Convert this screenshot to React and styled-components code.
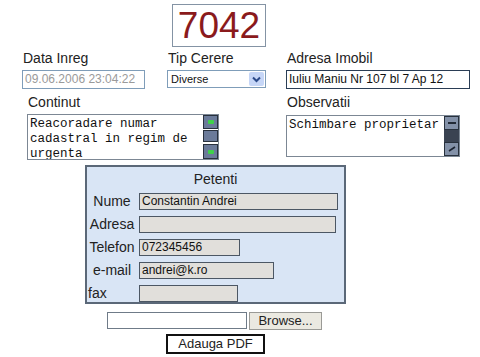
import { Fragment } from 'react'
import styled, { createGlobalStyle } from 'styled-components'

const Global = createGlobalStyle`
  body {
    margin: 0;
    background: #ffffff;
    font-family: "Liberation Sans", Arial, sans-serif;
    color: #222;
  }
`

const Page = styled.div`
  width: 480px;
  height: 357px;
  padding-top: 4px;
  box-sizing: border-box;
  display: flex;
  flex-direction: column;
`
const NumberBox = styled.div`
  margin-left: 172px;
  width: 94px;
  height: 43px;
  box-sizing: border-box;
  border: 1px solid #8493a4;
  color: #8a1a1c;
  font-size: 37px;
  line-height: 41px;
  text-align: center;
`
const FieldsRow = styled.div`
  display: grid;
  grid-template-columns: ${p => p.$cols};
  padding-left: ${p => p.$left}px;
  margin-top: ${p => p.$top}px;
  align-items: start;
`
const Field = styled.div`
  display: flex;
  flex-direction: column;
  gap: 4px;
`
const Label = styled.div`
  font-size: 14px;
  line-height: 16px;
  color: #222;
  padding-left: 1px;
`
const TextBox = styled.div`
  width: ${p => p.$w}px;
  height: 19px;
  box-sizing: border-box;
  border: 1px solid ${p => p.$border || '#7f9db9'};
  color: ${p => p.$color || '#111'};
  font-size: 12px;
  line-height: 17px;
  padding-left: 2px;
  white-space: nowrap;
  overflow: hidden;
  background: #fff;
`
const Select = styled.div`
  width: 99px;
  height: 18px;
  box-sizing: border-box;
  border: 1px solid #7f9db9;
  display: flex;
  align-items: center;
  justify-content: space-between;
  font-size: 11px;
  padding-left: 3px;
  padding-right: 1px;
  color: #111;
`
const ArrowBtn = styled.div`
  width: 15px;
  height: 14px;
  background: #c6d6f7;
  border-radius: 2px;
  display: flex;
  align-items: center;
  justify-content: center;
`
const Area = styled.div`
  width: ${p => p.$w}px;
  height: ${p => p.$h}px;
  margin-top: ${p => p.$top || 0}px;
  box-sizing: border-box;
  border: 1px solid #7c8794;
  display: flex;
  background: #fff;
`
const AreaText = styled.div`
  flex: 1;
  font-family: "Liberation Mono", "Courier New", monospace;
  font-size: 12.5px;
  line-height: 15px;
  padding: 2px 0 0 2px;
  overflow: hidden;
  color: #111;
`
const Scroll = styled.div`
  width: 15px;
  display: flex;
  flex-direction: column;
  background: ${p => p.$track};
`
const ScrollBtn = styled.div`
  height: ${p => p.$h}px;
  box-sizing: border-box;
  border: 1px solid #28313d;
  background: ${p => p.$bg || '#6b7b9a'};
  display: flex;
  align-items: center;
  justify-content: center;
  margin-bottom: ${p => p.$mb || 0}px;
`
const Dot = styled.div`
  width: 6px;
  height: 4px;
  background: #3ed24a;
  border-radius: 1px;
`
const Petenti = styled.div`
  margin-left: 85px;
  margin-top: 5px;
  width: 261px;
  height: 139px;
  box-sizing: border-box;
  border: 2px solid #5b6878;
  background: #d9e5f5;
  padding-top: 4px;
  display: flex;
  flex-direction: column;
`
const BoxTitle = styled.div`
  text-align: center;
  font-size: 14px;
  line-height: 16px;
  margin-bottom: 6px;
  color: #222;
`
const PRows = styled.div`
  display: grid;
  grid-template-columns: 50px auto;
  column-gap: 2px;
  row-gap: 6px;
  align-items: center;
`
const PLabel = styled.div`
  font-size: 14px;
  line-height: 17px;
  text-align: ${p => p.$align || 'center'};
  padding-left: ${p => p.$align === 'left' ? 1 : 0}px;
  color: #222;
`
const PInput = styled.div`
  width: ${p => p.$w}px;
  height: 17px;
  box-sizing: border-box;
  border: 1px solid #4c5764;
  background: #e1dfdb;
  font-size: 12px;
  line-height: 15px;
  padding-left: 2px;
  color: #111;
`
const FileRow = styled.div`
  display: flex;
  gap: 2px;
  margin-left: 107px;
  margin-top: 8px;
`
const FileInput = styled.div`
  width: 140px;
  height: 17px;
  box-sizing: border-box;
  border: 1px solid #6f7b88;
  background: #fff;
`
const BrowseBtn = styled.div`
  width: 73px;
  height: 18px;
  box-sizing: border-box;
  border: 1px solid #9a9a96;
  background: #ebe9e1;
  font-size: 13px;
  line-height: 16px;
  text-align: center;
  color: #222;
`
const PdfBtn = styled.div`
  margin-left: 166px;
  margin-top: 4px;
  width: 99px;
  height: 20px;
  box-sizing: border-box;
  border: 2px solid #111;
  font-size: 13px;
  line-height: 16px;
  text-align: center;
  color: #222;
`

const petenti = [
  { label: 'Nume', value: 'Constantin Andrei', w: 199 },
  { label: 'Adresa', value: '', w: 197 },
  { label: 'Telefon', value: '072345456', w: 101 },
  { label: 'e-mail', value: 'andrei@k.ro', w: 135 },
  { label: 'fax', value: '', w: 99, align: 'left' },
]

export default function App() {
  return (
    <Page>
      <Global />
      <NumberBox>7042</NumberBox>
      <FieldsRow $cols="145px 119px auto" $left={22} $top={3}>
        <Field>
          <Label>Data Inreg</Label>
          <TextBox $w={123} $color="#9a9a9a">09.06.2006 23:04:22</TextBox>
        </Field>
        <Field>
          <Label>Tip Cerere</Label>
          <Select>
            Diverse
            <ArrowBtn>
              <svg width="9" height="7" viewBox="0 0 9 7">
                <path d="M1 1.5 L4.5 5 L8 1.5" fill="none" stroke="#2b4a8a" strokeWidth="2" />
              </svg>
            </ArrowBtn>
          </Select>
        </Field>
        <Field>
          <Label>Adresa Imobil</Label>
          <TextBox $w={184} $border="#2a3d55">Iuliu Maniu Nr 107 bl 7 Ap 12</TextBox>
        </Field>
      </FieldsRow>
      <FieldsRow $cols="259px auto" $left={27} $top={5}>
        <Field>
          <Label>Continut</Label>
          <Area $w={192} $h={46}>
            <AreaText>Reacoradare numar<br />cadastral in regim de<br />urgenta</AreaText>
            <Scroll $track="#ffffff">
              <ScrollBtn $h={14} $mb={1}><Dot /></ScrollBtn>
              <ScrollBtn $h={12} $mb={2} />
              <ScrollBtn $h={15}><Dot /></ScrollBtn>
            </Scroll>
          </Area>
        </Field>
        <Field>
          <Label>Observatii</Label>
          <Area $w={174} $h={42} $top={1}>
            <AreaText>Schimbare proprietar</AreaText>
            <Scroll $track="#3a4352">
              <ScrollBtn $h={14} $bg="#8391a8">
                <svg width="8" height="3" viewBox="0 0 8 3"><rect x="0" y="0" width="8" height="2" fill="#222a36" /></svg>
              </ScrollBtn>
              <div style={{ flex: 1 }} />
              <ScrollBtn $h={14} $bg="#8391a8">
                <svg width="8" height="6" viewBox="0 0 8 6">
                  <path d="M1 5 L7 1" stroke="#1b2330" strokeWidth="1.6" fill="none" />
                </svg>
              </ScrollBtn>
            </Scroll>
          </Area>
        </Field>
      </FieldsRow>
      <Petenti>
        <BoxTitle>Petenti</BoxTitle>
        <PRows>
          {petenti.map(p => (
            <Fragment key={p.label}>
              <PLabel $align={p.align}>{p.label}</PLabel>
              <PInput $w={p.w}>{p.value}</PInput>
            </Fragment>
          ))}
        </PRows>
      </Petenti>
      <FileRow>
        <FileInput />
        <BrowseBtn>Browse...</BrowseBtn>
      </FileRow>
      <PdfBtn>Adauga PDF</PdfBtn>
    </Page>
  )
}
